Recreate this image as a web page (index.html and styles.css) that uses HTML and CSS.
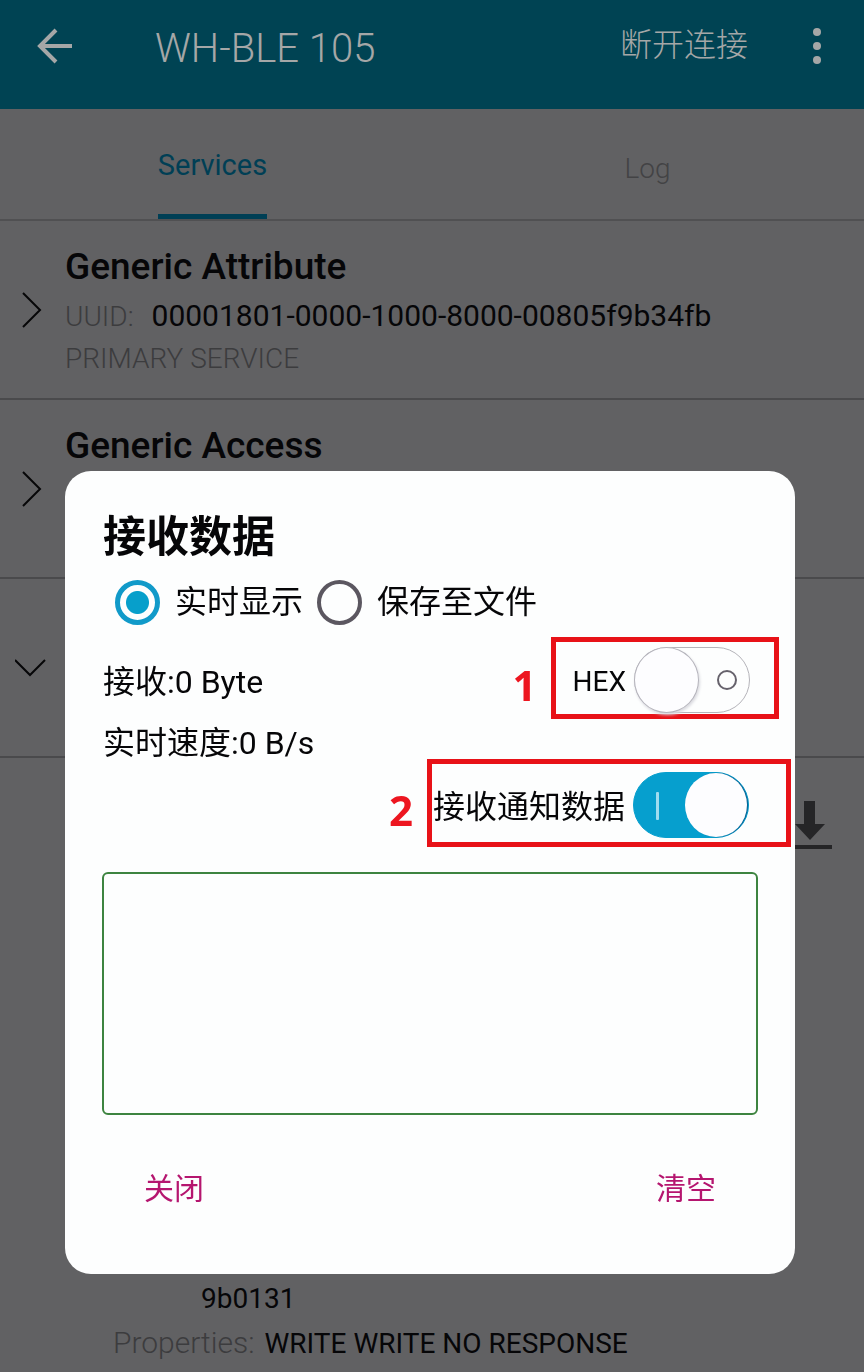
FILE: index.html
```html
<!doctype html>
<html lang="zh-CN">
<head>
<meta charset="UTF-8">
<title>WH-BLE 105</title>
<link rel="stylesheet" href="styles.css">
</head>
<body>
<div class="app">
	<header class="topbar">
		<button class="icon-btn back" type="button" aria-label="返回">
			<svg width="38" height="38" viewBox="0 0 38 38"><path d="M36 19H4M20 3L4 19l16 16"/></svg>
		</button>
		<h1 class="device">WH-BLE 105</h1>
		<button class="disconnect" type="button">断开连接</button>
		<button class="icon-btn more" type="button" aria-label="更多">
			<svg width="10" height="38" viewBox="0 0 10 38"><circle cx="5" cy="5" r="4"/><circle cx="5" cy="19" r="4"/><circle cx="5" cy="33" r="4"/></svg>
		</button>
	</header>
	<nav class="tabs">
		<a class="tab on" href="#services"><span>Services</span></a>
		<a class="tab" href="#log"><span>Log</span></a>
	</nav>
	<main class="services" id="services">
		<section class="service">
			<svg class="arrow" width="32" height="38" viewBox="0 0 32 38"><path d="M8 2l17 17L8 36"/></svg>
			<div class="info">
				<h2>Generic Attribute</h2>
				<p><span class="key">UUID:</span><span class="uuid">00001801-0000-1000-8000-00805f9b34fb</span></p>
				<p class="key">PRIMARY SERVICE</p>
			</div>
		</section>
		<section class="service">
			<svg class="arrow" width="32" height="38" viewBox="0 0 32 38"><path d="M8 2l17 17L8 36"/></svg>
			<div class="info">
				<h2>Generic Access</h2>
			</div>
		</section>
		<section class="service">
			<svg class="arrow" width="32" height="38" viewBox="0 0 32 38"><path d="M0 11l15 15 15-15"/></svg>
		</section>
		<section class="character">
			<button class="icon-btn download" type="button" aria-label="接收">
				<svg width="44" height="48" viewBox="0 0 44 48"><path d="M16 0h11v23h10L22 39 7 23h9zM0 44h44v4H0z"/></svg>
			</button>
			<div class="props">
				<p class="value">9b0131</p>
				<p><span class="key">Properties:</span><span>WRITE WRITE NO RESPONSE</span></p>
			</div>
		</section>
	</main>
</div>
<div class="mask">
	<div class="dialog" role="dialog" aria-labelledby="dialog_title">
		<h2 class="title" id="dialog_title">接收数据</h2>
		<div class="radios">
			<label><input class="radio" type="radio" name="mode" checked>实时显示</label>
			<label><input class="radio" type="radio" name="mode">保存至文件</label>
		</div>
		<div class="row row-hex">
			<p>接收:0 Byte</p>
			<b class="num">1</b>
			<label class="mark"><span>HEX</span><input class="switch" type="checkbox"></label>
		</div>
		<p class="speed">实时速度:0 B/s</p>
		<div class="row row-notify">
			<b class="num">2</b>
			<label class="mark"><span>接收通知数据</span><input class="switch" type="checkbox" checked></label>
		</div>
		<textarea class="output" aria-label="接收数据" readonly></textarea>
		<div class="btns">
			<button type="button">关闭</button>
			<button type="button">清空</button>
		</div>
	</div>
</div>
</body>
</html>
```
FILE: styles.css
```css
*,:before,:after{margin:0;padding:0;box-sizing:border-box;}
body{background:#616163;color:#060608;font-family:Roboto,"Noto Sans CJK SC",sans-serif;font-size:28px;}
button,textarea{font-family:inherit;font-size:inherit;border:0;background:none;}
button,input{cursor:pointer;}
a{color:inherit;text-decoration:none;}
svg{display:block;}
.app{min-height:100vh;display:flex;flex-direction:column;}

/* top bar */
.topbar{height:109px;padding:0 42px 18px 36px;display:flex;align-items:center;background:#004353;color:#a5a7a7;}
.device{margin-left:81px;padding-top:6px;font-size:40px;line-height:48px;font-weight:300;}
.back path{fill:none;stroke:#a5a7a7;stroke-width:4;}
.more circle{fill:#a5a7a7;}
.disconnect{margin-left:auto;margin-right:64px;color:#a5a7a7;font-size:32px;line-height:42px;padding-bottom:2px;font-weight:300;}
.tabs{height:112px;display:flex;border-bottom:2px solid #505052;}
.tab{flex:1;display:flex;justify-content:center;color:#434345;font-weight:300;}
.tab span{padding-top:4px;line-height:112px;}
.tab:last-child{padding-right:4px;}
.tab.on{padding-right:10px;color:#003f55;font-size:29px;font-weight:400;}
.tab.on span{padding-top:8px;border-bottom:5px solid #003f55;line-height:97px;}

/* service list */
.services{flex:1;display:flex;flex-direction:column;}
.service{height:179px;display:flex;align-items:center;gap:18px;padding-left:15px;border-bottom:2px solid #4a4a4c;}
.arrow path{fill:none;stroke:#060608;stroke-width:2;}
.info{align-self:flex-start;padding-top:22px;}
.info h2{margin-bottom:4px;font-size:37px;line-height:48px;font-weight:500;}
.info p{line-height:42px;font-weight:300;}
.info .uuid{margin-left:18px;font-size:30px;font-weight:400;}
.key{color:#3c3c3e;font-weight:300;}
.character{flex:1;display:flex;flex-direction:column;justify-content:space-between;padding:43px 32px 6px 113px;}
.download{align-self:flex-end;}
.download path{fill:#252527;}
.props p{line-height:44px;}
.props .value{padding-left:88px;}
.props .key{margin-right:10px;font-size:30px;}

/* receive dialog */
.mask{position:fixed;top:0;right:0;bottom:0;left:0;display:flex;align-items:flex-end;padding:0 69px 98px 65px;}
.dialog{flex:1;padding:37px 0 54px;border-radius:26px;background:#fdfefe;font-size:32px;}
.title{padding-left:38px;font-size:43px;line-height:58px;font-weight:700;}
.radios{display:flex;gap:14px;padding:14px 50px 12px;}
.radios label{display:flex;align-items:center;gap:15px;line-height:45px;}
.radio{appearance:none;width:45px;height:45px;border:4px solid #5b5760;border-radius:50%;}
.radio:checked{border:5px solid #119ac9;background:radial-gradient(circle,#079fcb 11px,#fdfefe 12px);}
.row{display:flex;align-items:center;padding-left:38px;}
.row-hex{padding-right:16px;}
.row-notify{padding-right:4px;}
.row p{padding-top:8px;line-height:40px;}
.num{margin-left:auto;margin-right:14px;padding-top:14px;color:#ed1620;font-family:"Noto Sans",sans-serif;font-size:42px;line-height:56px;}
.mark{display:flex;align-items:center;gap:8px;padding-top:4px;border:5px solid #e81218;}
.mark span{padding-top:4px;line-height:40px;}
.row-hex .mark{height:82px;padding-right:24px;padding-left:17px;font-size:28px;}
.row-notify .mark{height:88px;padding-right:37px;padding-left:1px;}
.switch{appearance:none;position:relative;width:116px;height:66px;border:1px solid #b5b4ba;border-radius:33px;}
.switch:before{content:"";position:absolute;top:-1px;left:-1px;width:65px;height:66px;border:1px solid #b5b4bc;border-radius:50%;background:#fdfdff;box-shadow:1px 2px 3px #d8d8de;}
.switch:after{content:"";position:absolute;top:22px;right:12px;width:20px;height:20px;border:2px solid #66626c;border-radius:50%;}
.switch:checked{border-color:#069fce;background:#069fce;}
.switch:checked:before{left:auto;right:1px;top:0;width:62px;height:64px;border:0;box-shadow:1px 0 1px #075a8c;}
.switch:checked:after{top:19px;left:22px;right:auto;width:3px;height:28px;border:0;border-radius:1px;background:#9fdcf0;}
.speed{padding-top:8px;padding-left:38px;line-height:32px;}
.output{display:block;width:calc(100% - 74px);height:243px;margin:25px 37px 39px;border:2px solid #3d8440;border-radius:6px;resize:none;outline:none;}
.btns{display:flex;justify-content:space-between;padding:0 79px 2px;}
.btns button{height:64px;color:#b5166f;font-size:30px;}
```
